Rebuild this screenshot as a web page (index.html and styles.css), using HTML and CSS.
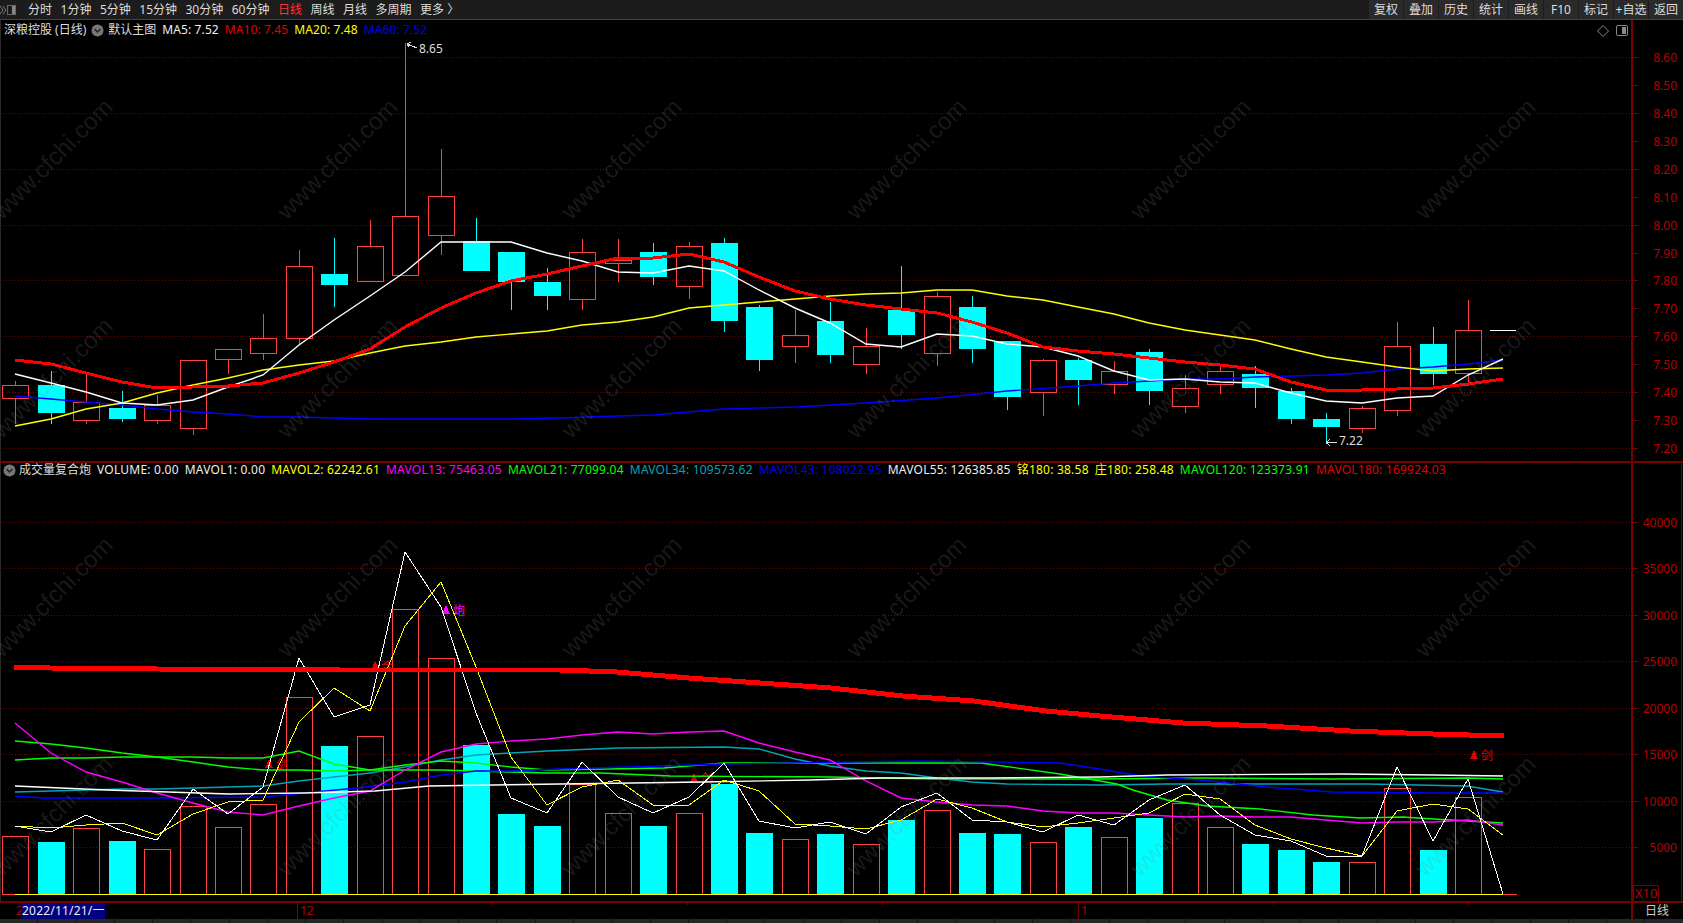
FILE: index.html
```html
<!DOCTYPE html>
<html lang="zh-CN">
<head>
<meta charset="utf-8">
<title>深粮控股 (日线)</title>
<link rel="stylesheet" href="styles.css">
</head>
<body>
<div class="app">
  <header class="toolbar">
    <svg class="tb-icon" width="16" height="12" viewBox="0 0 16 12"><path class="tb-chev" d="M0 2l3 4-3 4M3 2l3 4-3 4"/><rect class="tb-box" x="7.5" y="1.5" width="8" height="9"/><rect class="tb-fill" x="12" y="2" width="3" height="8"/></svg>
    <nav class="periods">
      <span>分时</span><span>1分钟</span><span>5分钟</span><span>15分钟</span><span>30分钟</span><span>60分钟</span><span class="active">日线</span><span>周线</span><span>月线</span><span>多周期</span><span>更多 〉</span>
    </nav>
    <nav class="actions">
      <span>复权</span><span>叠加</span><span>历史</span><span>统计</span><span>画线</span><span>F10</span><span>标记</span><span>+自选</span><span>返回</span>
    </nav>
  </header>

  <section class="pane pane-price">
    <svg class="canvas" width="1683" height="441" viewBox="0 20 1683 441">
      <path class="edge" d="M.5 20V461"/>
      <path class="grid" d="M3 57.5H1631M3 113.5H1631M3 169.5H1631M3 225.5H1631M3 280.5H1631M3 336.5H1631M3 392.5H1631M3 448.5H1631"/>
      <path class="axis" d="M1632 20V461"/>
      <path class="tick" d="M1632 57.5h6M1632 85.5h6M1632 113.5h6M1632 141.5h6M1632 169.5h6M1632 197.5h6M1632 225.5h6M1632 253.5h6M1632 280.5h6M1632 308.5h6M1632 336.5h6M1632 364.5h6M1632 392.5h6M1632 420.5h6M1632 448.5h6"/>
      <g class="axis-labels">
        <text x="1677" y="62">8.60</text><text x="1677" y="90">8.50</text><text x="1677" y="118">8.40</text><text x="1677" y="146">8.30</text><text x="1677" y="174">8.20</text><text x="1677" y="202">8.10</text><text x="1677" y="230">8.00</text><text x="1677" y="258">7.90</text><text x="1677" y="285">7.80</text><text x="1677" y="313">7.70</text><text x="1677" y="341">7.60</text><text x="1677" y="369">7.50</text><text x="1677" y="397">7.40</text><text x="1677" y="425">7.30</text><text x="1677" y="453">7.20</text>
      </g>
      <path class="wick-up" d="M15.5 381V385M15.5 398V424M86.5 374V402M86.5 420V424M157.5 395V405M157.5 420V424M193.5 428V435M228.5 359V374M263.5 314V338M263.5 353V360M299.5 250V266M299.5 338V345M370.5 220V246M370.5 281V282M405.5 43V216M441.5 149V196M441.5 235V255M582.5 239V252M582.5 299V310M618.5 239V260M618.5 263V282M689.5 242V246M689.5 286V299M795.5 310V335M795.5 346V363M866.5 328V346M866.5 364V374M937.5 292V296M937.5 353V366M1043.5 359V360M1043.5 392V416M1114.5 361V371M1114.5 384V394M1185.5 375V388M1185.5 406V413M1220.5 365V371M1220.5 384V394M1362.5 406V408M1362.5 428V433M1397.5 322V346M1397.5 410V416M1468.5 300V330M1468.5 373V386"/>
      <path class="wick-dn" d="M51.5 371V424M122.5 391V422M334.5 238V307M476.5 218V241M511.5 282V310M547.5 268V310M653.5 243V285M724.5 238V332M759.5 305V371M830.5 302V363M901.5 266V349M972.5 296V363M1007.5 397V410M1078.5 358V405M1149.5 349V405M1255.5 366V408M1291.5 388V424M1326.5 413V442M1433.5 327V385"/>
      <path class="body-up" d="M2.5 385.5h26v13h-26zM73.5 402.5h26v18h-26zM144.5 405.5h26v15h-26zM180.5 360.5h26v68h-26zM215.5 349.5h26v10h-26zM250.5 338.5h26v15h-26zM286.5 266.5h26v72h-26zM357.5 246.5h26v35h-26zM392.5 216.5h26v59h-26zM428.5 196.5h26v39h-26zM569.5 252.5h26v47h-26zM605.5 260.5h26v3h-26zM676.5 246.5h26v40h-26zM782.5 335.5h26v11h-26zM853.5 346.5h26v18h-26zM924.5 296.5h26v57h-26zM1030.5 360.5h26v32h-26zM1101.5 371.5h26v13h-26zM1172.5 388.5h26v18h-26zM1207.5 371.5h26v13h-26zM1349.5 408.5h26v20h-26zM1384.5 346.5h26v64h-26zM1455.5 330.5h26v43h-26z"/>
      <path class="body-dn" d="M38 385h27v28h-27zM109 408h27v11h-27zM321 274h27v11h-27zM463 241h27v30h-27zM498 252h27v30h-27zM534 282h27v14h-27zM640 252h27v25h-27zM711 243h27v78h-27zM746 307h27v53h-27zM817 321h27v34h-27zM888 310h27v25h-27zM959 307h27v42h-27zM994 341h27v56h-27zM1065 360h27v20h-27zM1136 352h27v39h-27zM1242 374h27v14h-27zM1278 391h27v28h-27zM1313 419h27v8h-27zM1420 344h27v30h-27z"/>
      <polyline class="ln ma ln-blue" points="15,396 51,399 86,402 122,405 157,409 193,412 228,414 263,417 299,417 334,418 370,419 405,419 441,419 476,419 511,419 560,418 618,416 653,415 724,409 795,407 866,403 937,398 1007,391 1078,386 1114,383 1149,381 1185,379 1220,379 1255,377 1291,376 1326,375 1362,373 1397,369 1433,367 1468,364 1503,360"/>
      <polyline class="ln ma ln-yellow" points="15,426 51,419 86,409 122,403 157,393 193,385 228,378 263,370 299,365 334,361 370,353 405,346 441,342 476,337 511,334 547,331 582,325 618,322 653,317 689,308 724,305 759,302 795,299 830,296 866,294 901,293 937,290 972,290 1007,296 1043,300 1078,307 1114,314 1149,323 1185,330 1220,335 1255,340 1291,349 1326,357 1362,362 1397,367 1433,371 1468,369 1503,368"/>
      <polyline class="ln ma ln-white" points="15,374 51,383 86,392 122,403 157,405 193,400 228,387 263,375 299,345 334,320 370,296 405,272 441,242 476,242 511,242 547,253 582,261 618,272 653,273 689,266 724,271 759,290 795,308 830,323 866,344 901,347 937,334 972,336 1007,344 1043,347 1078,356 1114,371 1149,380 1185,379 1220,382 1255,383 1291,393 1326,401 1362,403 1397,398 1433,396 1468,375 1503,359"/>
      <polyline class="ln-red" points="15,360 51,364 86,373 122,382 157,388 193,387 228,386 263,383 299,373 334,362 370,349 405,327 441,308 476,293 511,281 547,274 582,266 618,258 653,258 689,254 724,262 759,277 795,291 830,299 866,305 901,309 937,313 972,322 1007,333 1043,347 1078,351 1114,354 1149,358 1185,362 1220,365 1255,369 1291,382 1326,390 1362,390 1397,389 1433,388 1468,384 1503,379"/>
      <path class="dash" d="M1490 330.5h26"/>
      <path class="pointer" d="M417 48l-10-4M407 44l4-2M407 44l2 3M1337 442.5h-11M1326 442.5l4-3M1326 442.5l4 3"/>
      <text class="note" x="419" y="53">8.65</text>
      <text class="note" x="1339" y="445">7.22</text>
    </svg>
    <div class="legend legend-price">
      <span class="name">深粮控股 (日线)</span>
      <svg class="chev" width="13" height="13" viewBox="0 0 13 13"><circle class="chev-bg" cx="6.5" cy="6.5" r="6"/><path class="chev-arrow" d="M3.5 5l3 3 3-3"/></svg>
      <span class="name">默认主图</span>
      <span class="c-white">MA5: 7.52</span><span class="c-red">MA10: 7.45</span><span class="c-yellow">MA20: 7.48</span><span class="c-blue">MA60: 7.52</span>
    </div>
    <svg class="corner" width="32" height="12" viewBox="0 0 32 12"><path class="corner-ln" d="M6 .5l5.500 5.500-5.500 5.500-5.500-5.500z"/><rect class="corner-ln" x="19.500" y=".5" width="11" height="10" rx="1.500"/><rect class="corner-fill" x="25" y="2" width="4" height="7"/></svg>
  </section>

  <section class="pane pane-vol">
    <svg class="canvas" width="1683" height="438" viewBox="0 463 1683 438">
      <path class="edge" d="M.5 463V901"/>
      <path class="grid" d="M3 522.5H1631M3 568.5H1631M3 615.5H1631M3 661.5H1631M3 708.5H1631M3 754.5H1631M3 801.5H1631M3 847.5H1631"/>
      <path class="axis" d="M1632 463V901"/>
      <path class="edge-red" d="M1681.500 463V901"/>
      <path class="tick" d="M1632 522.5h6M1632 568.5h6M1632 615.5h6M1632 661.5h6M1632 708.5h6M1632 754.5h6M1632 801.5h6M1632 847.5h6"/>
      <g class="axis-labels">
        <text x="1677" y="527">40000</text><text x="1677" y="573">35000</text><text x="1677" y="620">30000</text><text x="1677" y="666">25000</text><text x="1677" y="713">20000</text><text x="1677" y="759">15000</text><text x="1677" y="806">10000</text><text x="1677" y="852">5000</text>
      </g>
      <rect class="x10-box" x="1633.500" y="885.500" width="25" height="16"/>
      <text class="x10" x="1635" y="898">X10</text>
      <path class="body-up" d="M2.5 836.5h26V894h-26zM73.5 828.5h26V894h-26zM144.5 849.5h26V894h-26zM180.5 806.5h26V894h-26zM215.5 827.5h26V894h-26zM250.5 804.5h26V894h-26zM286.5 697.5h26V894h-26zM357.5 736.5h26V894h-26zM392.5 609.5h26V894h-26zM428.5 658.5h26V894h-26zM569.5 784.5h26V894h-26zM605.5 813.5h26V894h-26zM676.5 813.5h26V894h-26zM782.5 839.5h26V894h-26zM853.5 844.5h26V894h-26zM924.5 810.5h26V894h-26zM1030.5 842.5h26V894h-26zM1101.5 837.5h26V894h-26zM1172.5 803.5h26V894h-26zM1207.5 827.5h26V894h-26zM1349.5 862.5h26V894h-26zM1384.5 788.5h26V894h-26zM1455.5 797.5h26V894h-26z"/>
      <path class="body-dn" d="M38 842h27v52h-27zM109 841h27v53h-27zM321 746h27v148h-27zM463 745h27v149h-27zM498 814h27v80h-27zM534 826h27v68h-27zM640 826h27v68h-27zM711 784h27v110h-27zM746 833h27v61h-27zM817 834h27v60h-27zM888 820h27v74h-27zM959 833h27v61h-27zM994 834h27v60h-27zM1065 827h27v67h-27zM1136 818h27v76h-27zM1242 844h27v50h-27zM1278 850h27v44h-27zM1313 862h27v32h-27zM1420 850h27v44h-27z"/>
      <path class="base-red" d="M3 894.500H15M1503 894.500H1517"/>
      <path class="base-yellow" d="M15 894.500H1503"/>
      <g class="marks-red">
        <polygon points="269,759 273,768 265,768"/>
        <text x="276" y="769">剑</text>
        <polygon points="375,661 379,670 371,670"/>
        <text x="381" y="671">合</text>
        <polygon points="694,773 698,782 690,782"/>
        <text x="701" y="783">剑</text>
        <polygon points="1474,750 1478,759 1470,759"/>
        <text x="1481" y="760">剑</text>
      </g>
      <g class="marks-pink">
        <polygon points="446,605 450,614 442,614"/>
        <text x="453" y="615">炮</text>
      </g>
      <polyline class="ln ma ln-teal" points="15,792 51,791 86,790 122,789 157,789 193,788 228,787 263,786 299,781 334,777 370,773 405,767 441,760 476,755 511,753 547,751 618,748 724,747 759,749 795,759 830,766 866,771 901,773 937,778 972,782 1007,784 1100,785 1167,784 1267,784 1367,784 1467,786 1503,792"/>
      <polyline class="ln ma ln-green" points="15,741 51,744 86,748 122,753 157,757 193,762 228,767 263,770 299,770 334,771 370,770 405,770 441,770 476,771 511,772 547,773 600,773 670,776 830,777 936,779 1100,779 1200,778 1333,779 1467,778 1503,779"/>
      <polyline class="ln ma ln-green" points="15,760 51,758 86,758 122,757 157,757 193,757 228,758 263,758 299,751 334,764 370,770 405,765 441,761 476,763 511,767 547,770 664,768 724,763 881,763 981,763 1060,774 1117,784 1133,790 1167,800 1207,806 1260,809 1313,815 1360,818 1403,817 1433,819 1503,823"/>
      <polyline class="ln ma ln-blue" points="15,796 43,798 157,798 263,797 304,793 357,788 405,782 441,775 476,771 511,771 560,769 724,764 917,761 1060,763 1100,769 1140,776 1200,780 1267,787 1333,792 1433,793 1503,793"/>
      <polyline class="ln ma ln-pink" points="15,723 51,753 86,772 122,782 157,793 193,803 228,812 263,815 299,806 334,798 370,791 405,770 441,752 476,744 511,741 547,739 582,735 618,732 653,734 689,732 724,731 759,743 795,752 830,760 866,781 901,798 937,802 972,805 1007,806 1043,811 1078,813 1114,813 1149,815 1185,817 1220,816 1255,817 1291,817 1326,820 1362,823 1397,822 1433,822 1468,820 1503,825"/>
      <polyline class="ln ma ln-white" points="15,786 107,790 229,794 304,793 375,791 429,786 560,784 703,782 810,780 881,778 989,778 1100,777 1167,775 1343,774 1433,775 1503,776"/>
      <polyline class="ln ln-yellow" points="15,826 51,828 86,825 122,823 157,835 193,814 228,802 263,800 299,722 334,688 370,711 405,626 441,582 476,667 511,757 547,805 582,787 618,780 653,805 689,805 724,780 759,791 795,824 830,826 866,829 901,820 937,799 972,808 1007,822 1043,827 1078,823 1114,818 1149,813 1185,794 1220,799 1255,825 1291,839 1326,848 1362,856 1397,811 1433,804 1468,809 1503,835"/>
      <polyline class="ln ln-white" points="15,826 51,832 86,815 122,831 157,840 193,789 228,814 263,787 299,658 334,717 370,705 405,552 441,607 476,713 511,798 547,813 582,762 618,797 653,813 689,797 724,763 759,821 795,828 830,822 866,834 901,807 937,793 972,820 1007,822 1043,832 1078,815 1114,825 1149,800 1185,785 1220,815 1255,835 1291,841 1326,856 1362,856 1397,767 1433,841 1468,779 1503,894"/>
      <polyline class="ln-bold" points="14,667 50,668 157,669 340,670 560,670 617,672 689,678 760,683 831,688 903,696 974,701 1046,711 1100,716 1183,723 1267,726 1350,731 1433,734 1504,736"/>
    </svg>
    <div class="legend legend-vol">
      <svg class="chev" width="13" height="13" viewBox="0 0 13 13"><circle class="chev-bg" cx="6.5" cy="6.5" r="6"/><path class="chev-arrow" d="M3.5 5l3 3 3-3"/></svg>
      <span class="name">成交量复合炮</span>
      <span class="c-white">VOLUME: 0.00</span><span class="c-white">MAVOL1: 0.00</span><span class="c-yellow">MAVOL2: 62242.61</span><span class="c-pink">MAVOL13: 75463.05</span><span class="c-green">MAVOL21: 77099.04</span><span class="c-teal">MAVOL34: 109573.62</span><span class="c-blue">MAVOL43: 108022.95</span><span class="c-white">MAVOL55: 126385.85</span><span class="c-yellow">铭180: 38.58</span><span class="c-yellow">庄180: 258.48</span><span class="c-green">MAVOL120: 123373.91</span><span class="c-red">MAVOL180: 169924.03</span>
    </div>
  </section>

  <svg class="xaxis" width="1683" height="16" viewBox="0 903 1683 16">
    <path class="tick" d="M297.500 903V919M492.500 903v2M687.500 903v2M882.500 903v2M1078.500 903V919M1273.500 903v2M1468.500 903v2"/>
    <path class="axis" d="M1632 903V919"/>
    <text class="x-label" x="16" y="915">2</text>
    <text class="x-label" x="300" y="915">12</text>
    <text class="x-label" x="1081" y="915">1</text>
    <rect class="date-box" x="21" y="903" width="84" height="16"/>
    <text class="date-text" x="22" y="915">2022/11/21/一</text>
    <text class="mode" x="1645" y="915">日线</text>
  </svg>

  <footer class="tabs">
    <i></i><i></i><i></i><i></i><i></i><i></i><i></i><i></i><i></i><i></i><i></i><i></i><i></i><i></i><i></i><i></i><i></i><i></i><i></i><i></i><i></i><i></i><i></i><i></i><i></i><i></i><i></i><i></i><i></i><i></i><i></i><i></i><i></i><i></i><i></i><i></i><i></i><i></i><i></i><i></i><i></i><i></i><i></i><i></i>
  </footer>

  <div class="watermarks" aria-hidden="true">
    <span>www.cfchi.com</span><span>www.cfchi.com</span><span>www.cfchi.com</span><span>www.cfchi.com</span><span>www.cfchi.com</span><span>www.cfchi.com</span>
    <span>www.cfchi.com</span><span>www.cfchi.com</span><span>www.cfchi.com</span><span>www.cfchi.com</span><span>www.cfchi.com</span><span>www.cfchi.com</span>
    <span>www.cfchi.com</span><span>www.cfchi.com</span><span>www.cfchi.com</span><span>www.cfchi.com</span><span>www.cfchi.com</span><span>www.cfchi.com</span>
    <span>www.cfchi.com</span><span>www.cfchi.com</span><span>www.cfchi.com</span><span>www.cfchi.com</span><span>www.cfchi.com</span><span>www.cfchi.com</span>
  </div>
</div>
</body>
</html>
```
FILE: styles.css
```css
* { box-sizing: border-box; margin: 0; padding: 0; }
html, body { width: 100%; height: 100%; background: #000; overflow: hidden; }
body { font: 12px/1 "Noto Sans", "Noto Sans CJK SC", sans-serif; color: #ddd; }

.app { position: relative; width: 1683px; height: 923px; display: flex; flex-direction: column; overflow: hidden; background: #000; }

/* top toolbar */
.toolbar { flex: none; height: 20px; display: flex; align-items: stretch; background: #1c1c1c; border-bottom: 1px solid #444; }
.tb-icon { flex: none; align-self: center; margin-right: 12px; }
.tb-chev { fill: none; stroke: #777; stroke-width: 1; }
.tb-box { fill: none; stroke: #666; }
.tb-fill { fill: #888; }
.periods { display: flex; align-items: center; gap: 8.5px; }
.periods .active { color: #f33; }
.actions { margin-left: auto; display: flex; gap: 1px; }
.actions span { width: 34px; display: flex; align-items: center; justify-content: center; background: #2a2a2a; white-space: nowrap; }

/* chart panes */
.pane { position: relative; flex: none; border-bottom: 2px solid #7a0000; }
.pane-price { height: 443px; }
.pane-vol { height: 440px; }
.canvas { position: absolute; left: 0; top: 0; display: block; shape-rendering: crispEdges; }

.legend { position: relative; display: flex; align-items: center; gap: 6px; padding-left: 4px; white-space: nowrap; }
.legend-price { height: 20px; }
.legend-price .chev { margin: 0 -2px 0 0; }
.legend-price > span:first-child { margin-right: -1px; }
.legend-price span + span { letter-spacing: .1px; }
.legend-vol { height: 14px; padding-left: 3px; }
.legend-vol .chev { margin-right: -3px; }
.legend-vol span + span { letter-spacing: .22px; }
.legend .name { color: #ddd; }
.chev { flex: none; }
.chev-bg { fill: #777; shape-rendering: auto; }
.chev-arrow { fill: none; stroke: #222; stroke-width: 1.5; }
.c-white { color: #eee; }
.c-red { color: #e00000; }
.c-yellow { color: #ff0; }
.c-blue { color: #0000f0; }
.c-pink { color: #f0f; }
.c-green { color: #0f0; }
.c-teal { color: #00a5b5; }

.corner { position: absolute; right: 54px; top: 5px; }
.corner-ln { fill: none; stroke: #888; stroke-width: 1; }
.corner-fill { fill: #888; }

/* svg chart parts */
.grid { fill: none; stroke: #7a0000; stroke-width: 1; stroke-dasharray: 1 2; }
.axis { fill: none; stroke: #7a0000; stroke-width: 2; }
.tick { fill: none; stroke: #7a0000; stroke-width: 1; }
.edge { fill: none; stroke: #2a2a2a; stroke-width: 1; }
.edge-red { fill: none; stroke: #7a0000; stroke-width: 1; }
.axis-labels text { fill: #b80000; font-size: 12px; text-anchor: end; }
.wick-up { fill: none; stroke: #ff4040; stroke-width: 1; }
.wick-dn { fill: none; stroke: #0ff; stroke-width: 1; }
.body-up { fill: none; stroke: #ff4040; stroke-width: 1; }
.body-dn { fill: #0ff; }
.ln { fill: none; stroke-width: 1; }
.ma { stroke-width: 1.4; shape-rendering: geometricPrecision; }
.ln-blue { stroke: #00f; }
.ln-yellow { stroke: #ff0; }
.ln-white { stroke: #fff; }
.ln-teal { stroke: #00a5b5; }
.ln-green { stroke: #0f0; }
.ln-pink { stroke: #f0f; }
.ln-red { fill: none; stroke: #f00; stroke-width: 3; }
.ln-bold { fill: none; stroke: #f00; stroke-width: 5; }
.dash { fill: none; stroke: #fff; stroke-width: 1; }
.pointer { fill: none; stroke: #ddd; stroke-width: 1; }
.note { fill: #ddd; font-size: 12px; }
.base-red { fill: none; stroke: #ff4040; stroke-width: 1; }
.base-yellow { fill: none; stroke: #ff0; stroke-width: 1; }
.marks-red { fill: #e00000; font-size: 12px; }
.marks-pink { fill: #f0f; font-size: 12px; }
.x10-box { fill: none; stroke: #7a0000; stroke-width: 1; }
.x10 { fill: #b80000; font-size: 13px; }

/* date axis */
.xaxis { flex: none; display: block; }
.x-label { fill: #b80000; font-size: 12px; }
.date-box { fill: #000080; }
.date-text { fill: #eee; font-size: 12px; letter-spacing: .2px; }
.mode { fill: #ccc; font-size: 12px; }

/* clipped tab strip */
.tabs { flex: 1; display: flex; gap: 1px; background: #111; }
.tabs i { flex: 1; background: #262626; }

/* watermark layer */
.watermarks { position: absolute; left: -90px; top: 49px; display: grid; grid-template-columns: repeat(6, 284.6px); grid-auto-rows: 219px; pointer-events: none; }
.watermarks span { place-self: center; transform: rotate(-45deg); white-space: nowrap; font: 24px "Liberation Sans", sans-serif; color: rgba(128, 128, 128, .2); }
```
